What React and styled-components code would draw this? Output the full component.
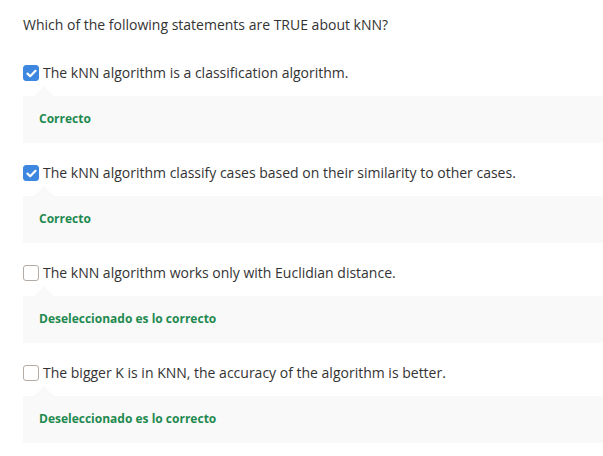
import styled, { createGlobalStyle } from 'styled-components';

const Global = createGlobalStyle`
  body { margin: 0; background: #fff; font-family: 'Open Sans', sans-serif; }
`

const Page = styled.div`
  padding: 15px 0 0 23px;
  color: #333;
`
const Question = styled.div`
  font-size: 14px;
  line-height: 20px;
  margin-bottom: 29px;
`
const Option = styled.div`
  margin-bottom: 21px;
`
const Row = styled.label`
  display: flex;
  align-items: center;
  gap: 4px;
  font-size: 14px;
  line-height: 18px;
  height: 18px;
`
const Box = styled.span`
  width: 16px;
  height: 16px;
  box-sizing: border-box;
  border-radius: 3px;
  flex: none;
  display: flex;
  align-items: center;
  justify-content: center;
  background: ${p => (p.checked ? '#3d87e0' : '#fff')};
  border: 1px solid ${p => (p.checked ? '#3d87e0' : '#b3aca6')};
`
const Feedback = styled.div`
  position: relative;
  margin-top: 14px;
  background: #f9f9f9;
  height: 47px;
  display: flex;
  align-items: center;
  padding-left: 16px;
  padding-bottom: 3px;
  box-sizing: border-box;
  font-size: 12px;
  font-weight: 700;
  color: #1f8a4f;
  &::before {
    content: '';
    position: absolute;
    left: 11px;
    top: -10px;
    border-left: 10px solid transparent;
    border-right: 10px solid transparent;
    border-bottom: 10px solid #f9f9f9;
  }
`

const items = [
  { text: 'The kNN algorithm is a classification algorithm.', checked: true, fb: 'Correcto' },
  { text: 'The kNN algorithm classify cases based on their similarity to other cases.', checked: true, fb: 'Correcto' },
  { text: 'The kNN algorithm works only with Euclidian distance.', checked: false, fb: 'Deseleccionado es lo correcto' },
  { text: 'The bigger K is in KNN, the accuracy of the algorithm is better.', checked: false, fb: 'Deseleccionado es lo correcto' },
]

export default function App() {
  return (
    <Page>
      <Global />
      <Question>Which of the following statements are TRUE about kNN?</Question>
      {items.map((it, i) => (
        <Option key={i}>
          <Row>
            <Box checked={it.checked}>
              {it.checked && (
                <svg width="11" height="9" viewBox="0 0 11 9">
                  <path d="M1.5 4.6 L4.2 7.2 L9.5 1.8" fill="none" stroke="#fff" strokeWidth="2.2" strokeLinecap="round" strokeLinejoin="round" />
                </svg>
              )}
            </Box>
            {it.text}
          </Row>
          <Feedback>{it.fb}</Feedback>
        </Option>
      ))}
    </Page>
  );
}
